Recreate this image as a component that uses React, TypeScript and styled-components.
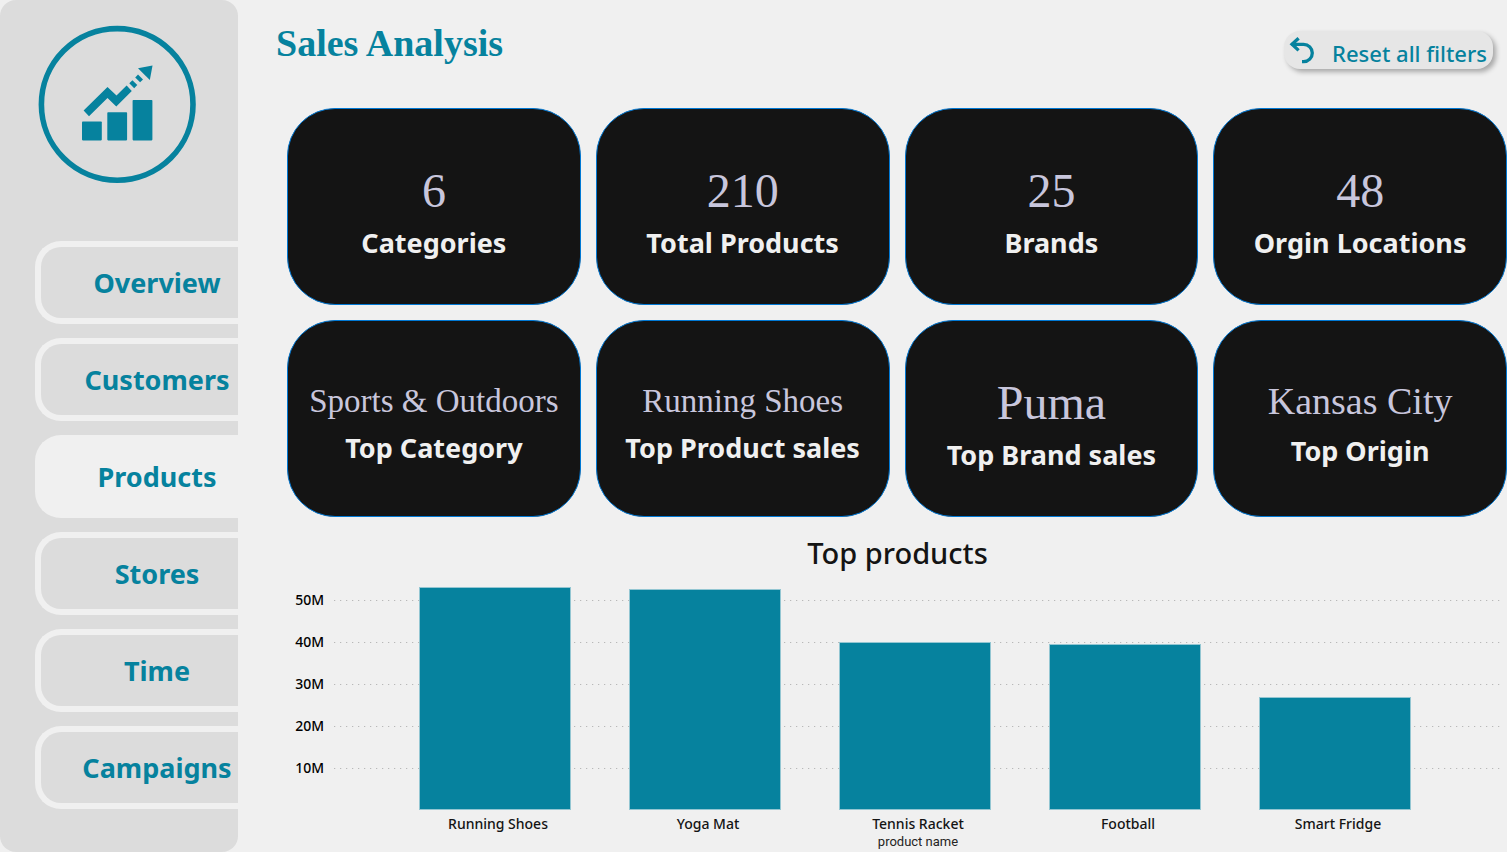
import React from "react";
import styled, { createGlobalStyle } from "styled-components";

const TEAL = "#06829e";
const INK = "#141414";
const PAGE = "#f0f0f0";
const SANS = '"Noto Sans", "Open Sans", sans-serif';
const SERIF = '"Liberation Serif", "Times New Roman", serif';

const GlobalStyle = createGlobalStyle`
  *, *::before, *::after { box-sizing: border-box; }
  body { margin: 0; background: ${PAGE}; font-family: ${SANS}; color: ${INK}; }
  h1, h2, dl, dd, figure, ul { margin: 0; padding: 0; }
`;

const Page = styled.div`
  display: grid;
  grid-template-columns: 238px minmax(0, 1fr);
  min-height: 100vh;
`;

const Sidebar = styled.aside`
  background: #dcdcdc;
  border-radius: 16px;
  padding: 24px 0 43px 35px;
`;

const Logo = styled.svg`
  display: block;
  width: 164px;
  height: 160px;
  margin-bottom: 57px;
`;

const Nav = styled.nav`
  display: flex;
  flex-direction: column;
  gap: 14px;
`;

const NavLink = styled.a<{ $active?: boolean }>`
  display: flex;
  align-items: center;
  justify-content: center;
  height: 83px;
  padding-left: 35px;
  border: 6px solid ${PAGE};
  border-right: 0;
  border-radius: 26px 0 0 26px;
  background: ${(p) => (p.$active ? PAGE : "transparent")};
  color: ${TEAL};
  font-size: 27px;
  font-weight: 700;
  line-height: 40px;
  text-decoration: none;
`;

const Main = styled.main`
  display: flex;
  flex-direction: column;
  min-width: 0;
`;

const Header = styled.header`
  display: flex;
  justify-content: space-between;
  align-items: flex-start;
  height: 108px;
  padding: 21px 14px 0 38px;
`;

const Title = styled.h1`
  color: ${TEAL};
  font: 700 38px/44px ${SERIF};
`;

const ResetButton = styled.button`
  display: flex;
  align-items: center;
  gap: 16px;
  height: 38px;
  margin-top: 10px;
  padding: 0 6px 0 5px;
  border: 0;
  border-radius: 16px;
  background: #e6e6e6;
  box-shadow: 3px 3px 5px rgba(0, 0, 0, 0.3);
  color: ${TEAL};
  font: 500 22px/30px ${SANS};
  white-space: nowrap;
  cursor: pointer;
`;

const ResetLabel = styled.span`
  padding-top: 6px;
`;

const CardGrid = styled.dl`
  display: grid;
  grid-template-columns: repeat(4, minmax(0, 1fr));
  gap: 15px;
  padding-left: 49px;
`;

type Size = "small" | "medium" | "large";

const valueSizes: Record<Size, { font: number; line: number; gap: number }> = {
  small: { font: 33, line: 38, gap: 8 },
  medium: { font: 38, line: 44, gap: 8 },
  large: { font: 48, line: 56, gap: 4 },
};

const Card = styled.div`
  display: flex;
  flex-direction: column-reverse;
  align-items: center;
  justify-content: center;
  height: 197px;
  padding-top: 12px;
  border: 1px solid #0078d4;
  border-radius: 48px;
  background: ${INK};
  white-space: nowrap;
`;

const CardLabel = styled.dt`
  color: ${PAGE};
  font-size: 27px;
  font-weight: 700;
  line-height: 40px;
`;

const CardValue = styled.dd<{ $size: Size }>`
  margin-bottom: ${(p) => valueSizes[p.$size].gap}px;
  color: #c8c6dc;
  font-family: ${SERIF};
  font-size: ${(p) => valueSizes[p.$size].font}px;
  line-height: ${(p) => valueSizes[p.$size].line}px;
`;

const Chart = styled.figure`
  padding: 16px 5px 0 51px;
`;

const ChartTitle = styled.h2`
  height: 46px;
  padding-left: 4px;
  font-size: 29px;
  font-weight: 500;
  line-height: 40px;
  text-align: center;
`;

const Plot = styled.div`
  display: grid;
  height: 231px;
`;

const GridLines = styled.div`
  grid-area: 1 / 1;
`;

const GridRow = styled.div`
  display: grid;
  grid-template-columns: 35px minmax(0, 1fr);
  column-gap: 10px;
  align-items: center;
  height: 42px;
  color: #000;
  font-size: 14px;
  font-weight: 500;
  line-height: 20px;
  text-align: right;
`;

const Dots = styled.span`
  height: 1px;
  background: repeating-linear-gradient(to right, #b8b8b8 0 1px, #e2e2e2 1px 2px, transparent 2px 6px);
`;

const Bars = styled.div`
  grid-area: 1 / 1;
  display: grid;
  grid-template-columns: repeat(5, minmax(0, 1fr));
  align-items: end;
  padding: 0 62px 0 101px;
`;

const Bar = styled.div`
  width: 72%;
  margin: 0 auto;
  border: 1px solid #93c6d2;
  background: ${TEAL};
`;

const AxisLabels = styled.ul`
  display: grid;
  grid-template-columns: repeat(5, minmax(0, 1fr));
  padding: 5px 59px 0 104px;
  list-style: none;
  font-size: 14px;
  font-weight: 500;
  line-height: 18px;
  text-align: center;
`;

const AxisTitle = styled.figcaption`
  padding: 0 59px 0 104px;
  color: #252423;
  font: 400 13px/17px Roboto, sans-serif;
  text-align: center;
`;

const navItems = ["Overview", "Customers", "Products", "Stores", "Time", "Campaigns"];

const cards: { value: string; label: string; size: Size }[] = [
  { value: "6", label: "Categories", size: "large" },
  { value: "210", label: "Total Products", size: "large" },
  { value: "25", label: "Brands", size: "large" },
  { value: "48", label: "Orgin Locations", size: "large" },
  { value: "Sports & Outdoors", label: "Top Category", size: "small" },
  { value: "Running Shoes", label: "Top Product sales", size: "small" },
  { value: "Puma", label: "Top Brand sales", size: "large" },
  { value: "Kansas City", label: "Top Origin", size: "medium" },
];

const ticks = ["50M", "40M", "30M", "20M", "10M"];
const AXIS_MAX = 55;

const products = [
  { name: "Running Shoes", sales: 53 },
  { name: "Yoga Mat", sales: 52.6 },
  { name: "Tennis Racket", sales: 40.1 },
  { name: "Football", sales: 39.5 },
  { name: "Smart Fridge", sales: 26.8 },
];

function GrowthLogo() {
  return (
    <Logo viewBox="35 24 164 160" role="img" aria-label="Sales growth">
      <circle cx="117.2" cy="104.4" r="75.8" fill="none" stroke={TEAL} strokeWidth="5.6" />
      <g fill={TEAL}>
        <rect x="82" y="121.4" width="19.8" height="19" rx="0.8" />
        <rect x="107.3" y="112.3" width="19.8" height="28.1" rx="0.8" />
        <rect x="132.6" y="100" width="19.8" height="40.4" rx="0.8" />
        <path d="M83.6 110.6 107.5 87 116.5 95.6 126.6 85.6 131.8 91 116.3 106.6 107.5 98 89 116.2Z" />
        <path d="M129.3 83.2 132.4 80.2 137.3 85 134.2 88.2Z" />
        <path d="M135.2 77.4 138 74.6 143 79.4 140.1 82.2Z" />
        <path d="M138 68.3 152.5 65.5 149.8 80Z" />
      </g>
    </Logo>
  );
}

function ResetIcon() {
  return (
    <svg width="27" height="28" viewBox="0 0 27 28" fill="none" stroke={TEAL} strokeWidth="3.3" aria-hidden="true">
      <path d="M2.5 8.3H14.6A8.7 8.7 0 0 1 14.6 25.7H13" />
      <path d="M9.6 2.2 3 8.3 9.6 14.4" />
    </svg>
  );
}

export default function App() {
  return (
    <>
      <GlobalStyle />
      <Page>
        <Sidebar>
          <GrowthLogo />
          <Nav>
            {navItems.map((item) => (
              <NavLink
                key={item}
                href={`#${item.toLowerCase()}`}
                $active={item === "Products"}
                aria-current={item === "Products" ? "page" : undefined}
              >
                {item}
              </NavLink>
            ))}
          </Nav>
        </Sidebar>
        <Main>
          <Header>
            <Title>Sales Analysis</Title>
            <ResetButton type="button">
              <ResetIcon />
              <ResetLabel>Reset all filters</ResetLabel>
            </ResetButton>
          </Header>
          <CardGrid>
            {cards.map((card) => (
              <Card key={card.label}>
                <CardLabel>{card.label}</CardLabel>
                <CardValue $size={card.size}>{card.value}</CardValue>
              </Card>
            ))}
          </CardGrid>
          <Chart>
            <ChartTitle>Top products</ChartTitle>
            <Plot>
              <GridLines>
                {ticks.map((tick) => (
                  <GridRow key={tick}>
                    {tick}
                    <Dots />
                  </GridRow>
                ))}
              </GridLines>
              <Bars>
                {products.map((p) => (
                  <Bar key={p.name} style={{ height: `${(p.sales / AXIS_MAX) * 100}%` }} />
                ))}
              </Bars>
            </Plot>
            <AxisLabels>
              {products.map((p) => (
                <li key={p.name}>{p.name}</li>
              ))}
            </AxisLabels>
            <AxisTitle>product name</AxisTitle>
          </Chart>
        </Main>
      </Page>
    </>
  );
}
